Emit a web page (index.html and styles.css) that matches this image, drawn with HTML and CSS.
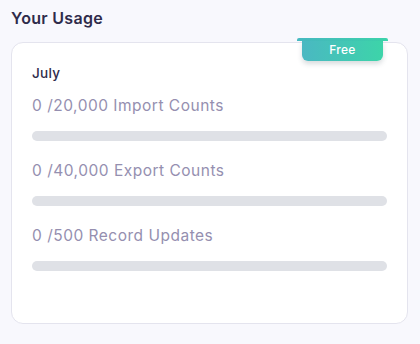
FILE: index.html
```html
<!DOCTYPE html>
<html>
<head>
<meta charset="utf-8">
<link rel="stylesheet" href="styles.css">
</head>
<body>
<h2 class="title">Your Usage</h2>
<div class="card">
  <div class="tag"><span class="tag-lip"></span><span class="tag-body">Free</span></div>
  <div class="month">July</div>
  <div class="list">
    <div class="item">
      <div class="label">0 /20,000 Import Counts</div>
      <div class="bar"><div class="fill" style="width:0%"></div></div>
    </div>
    <div class="item">
      <div class="label">0 /40,000 Export Counts</div>
      <div class="bar"><div class="fill" style="width:0%"></div></div>
    </div>
    <div class="item">
      <div class="label">0 /500 Record Updates</div>
      <div class="bar"><div class="fill" style="width:0%"></div></div>
    </div>
  </div>
</div>
</body>
</html>
```

FILE: styles.css
```css
html, body {
  margin: 0;
  background: #f8f8fd;
}
body {
  padding: 8px 12px 0 11px;
  font-family: Inter, "Noto Sans", sans-serif;
}
.title {
  margin: 0;
  font-size: 16px;
  line-height: 20px;
  font-weight: 600;
  letter-spacing: 0.3px;
  color: #2f2b4a;
}
.card {
  position: relative;
  margin-top: 14px;
  height: 282px;
  box-sizing: border-box;
  background: #ffffff;
  border: 1px solid #e4e4ee;
  border-radius: 12px;
  padding: 20px 20px 0 20px;
}
.tag {
  position: absolute;
  top: -5px;
  right: 19px;
  width: 91px;
  display: flex;
  flex-direction: column;
  align-items: center;
}
.tag-lip {
  display: block;
  width: 91px;
  height: 3px;
  border-radius: 2px 2px 0 0;
  background: linear-gradient(90deg, #47b9c1, #3cd3aa);
}
.tag-body {
  display: block;
  width: 81px;
  height: 20px;
  line-height: 18px;
  text-align: center;
  font-size: 12px;
  font-weight: 500;
  letter-spacing: 0.3px;
  color: #ffffff;
  border-radius: 0 0 6px 6px;
  background: linear-gradient(90deg, #4ab8c2, #3dd4a9);
  box-shadow: 0 3px 5px rgba(40, 60, 70, 0.18);
}
.month {
  font-size: 13.5px;
  line-height: 20px;
  font-weight: 500;
  letter-spacing: 0.3px;
  color: #2f2b4a;
}
.list {
  margin-top: 12px;
  display: flex;
  flex-direction: column;
  gap: 19px;
}
.item {
  display: flex;
  flex-direction: column;
  gap: 14px;
}
.label {
  font-size: 15.5px;
  line-height: 22px;
  letter-spacing: 0.5px;
  color: #958fb0;
}
.bar {
  height: 10px;
  border-radius: 5px;
  background: #dfe1e6;
  overflow: hidden;
}
.fill {
  height: 100%;
  background: #3dd4a9;
}
```
